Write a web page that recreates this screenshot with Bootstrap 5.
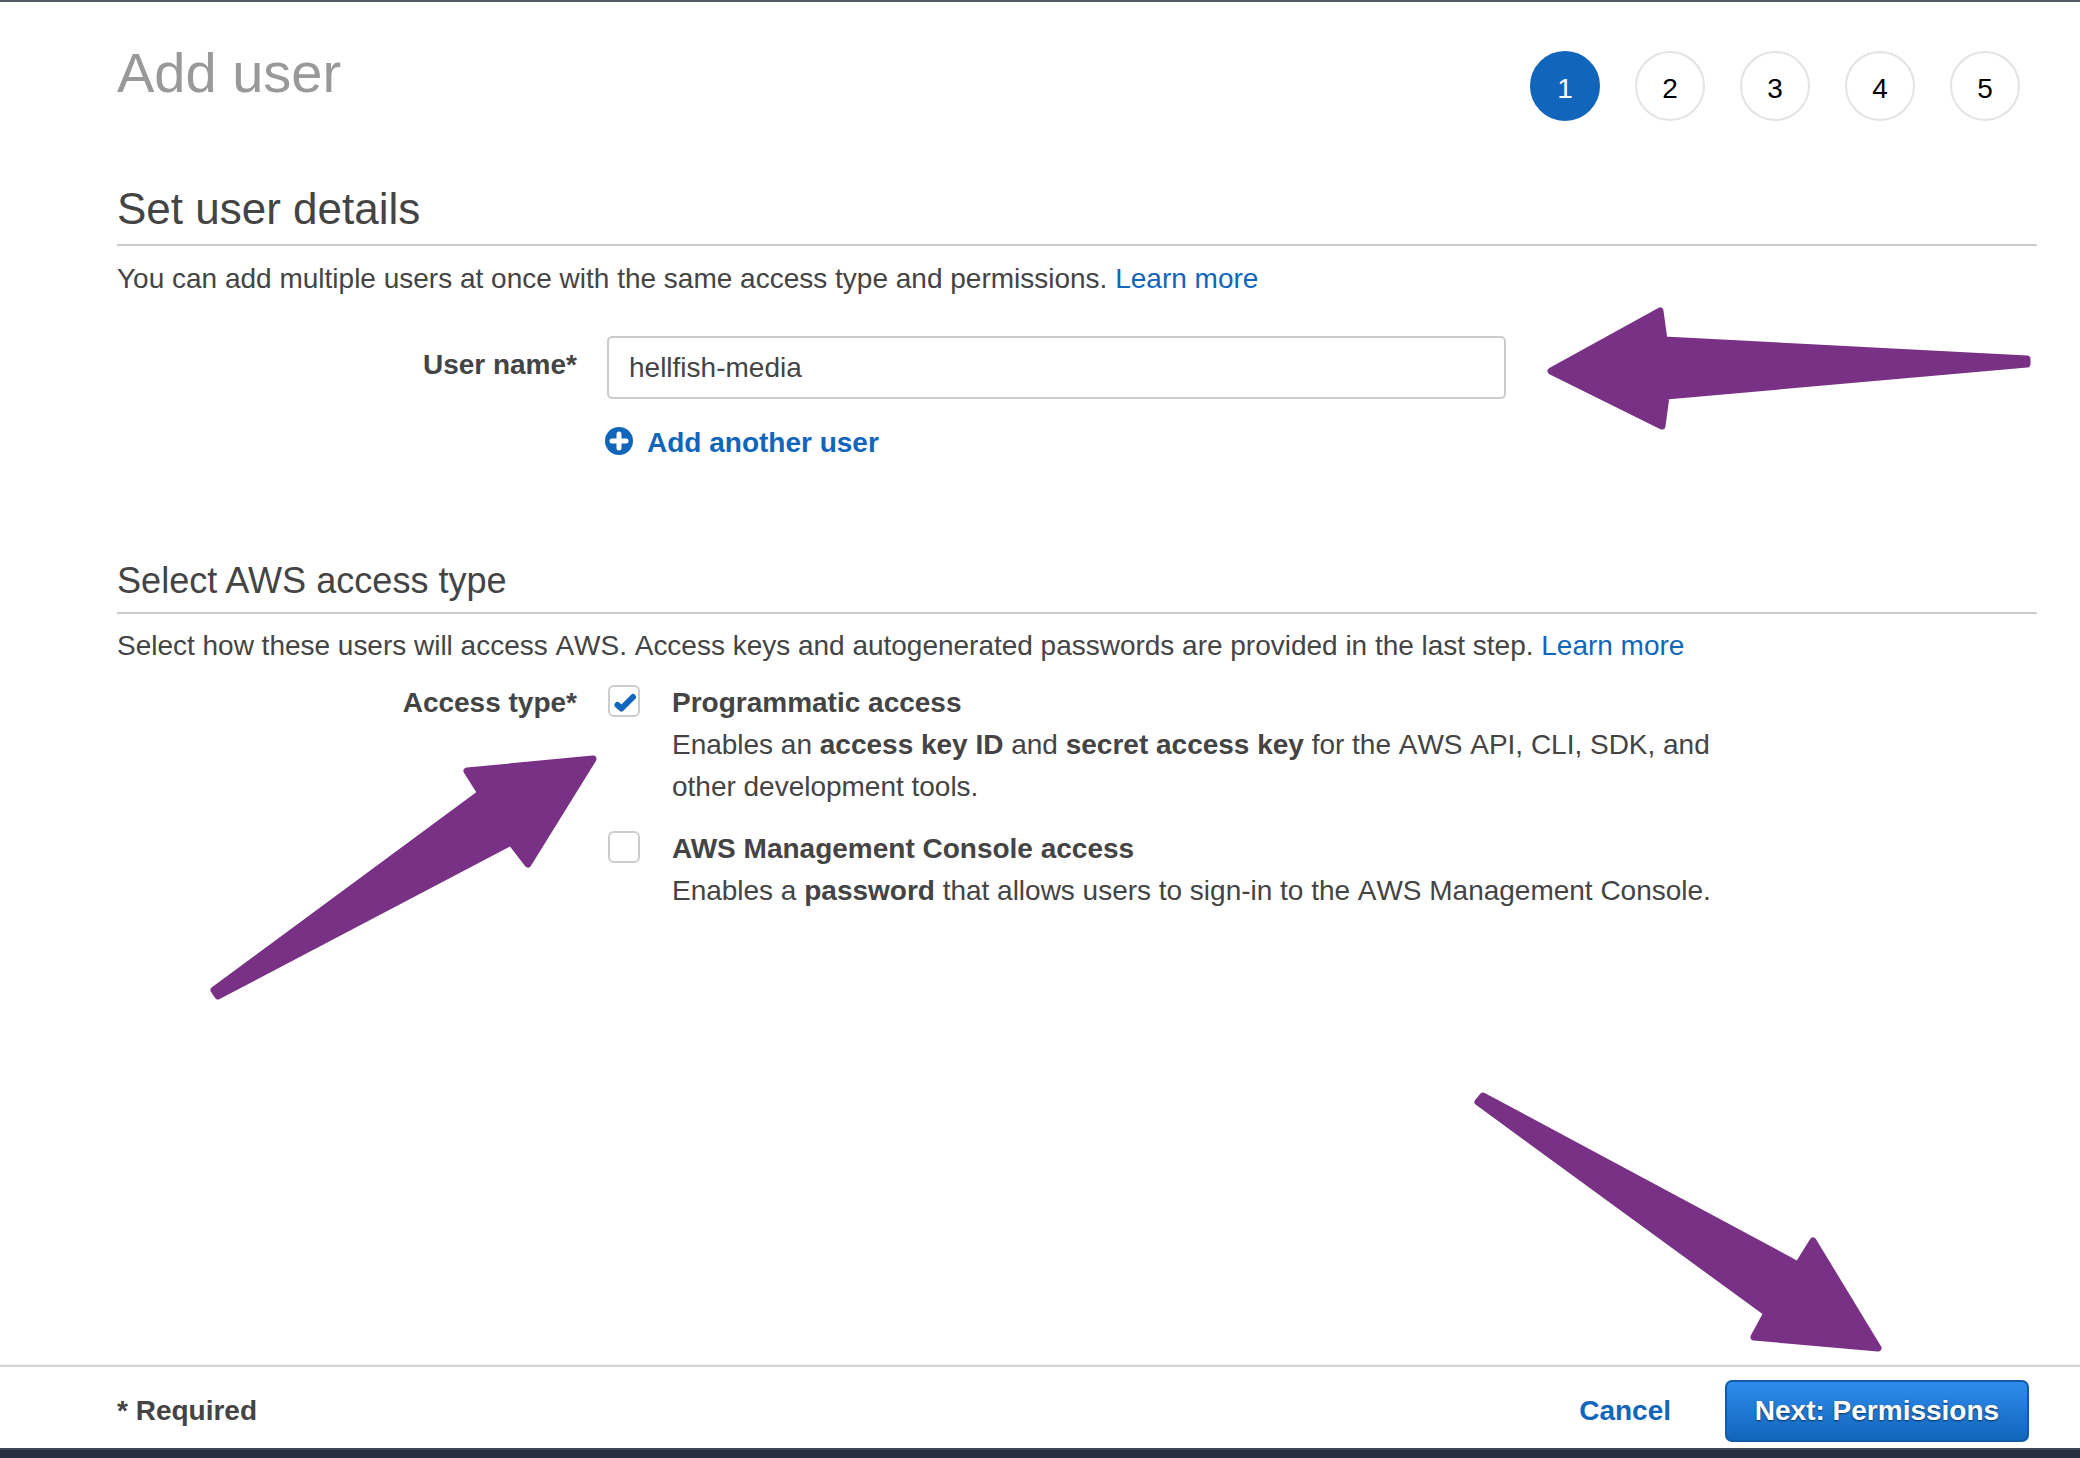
<!DOCTYPE html>
<html lang="en">
<head>
<meta charset="utf-8">
<title>Add user</title>
<link href="https://cdn.jsdelivr.net/npm/bootstrap@5.3.0/dist/css/bootstrap.min.css" rel="stylesheet">
<style>
html,body{height:100%;}
body{font-family:"Liberation Sans",Arial,sans-serif;font-size:28px;line-height:42px;color:#444;background:#fff;position:relative;width:2080px;height:1458px;overflow:hidden;}
a{color:#1166bb;text-decoration:none;}
.topline{height:2px;background:#545b64;}
.wizard{padding:0 43px 0 117px;}
.wtitle{font-size:56px;line-height:64px;color:#999;font-weight:400;margin:39px 0 0;}
.steps{gap:35px;margin:49px 17px 0 0;}
.stepdot{width:70px;height:70px;border:2px solid #e1e4e6;border-radius:50%;color:#000;padding-top:15px;}
.stepdot.on{background:#1166bb;border-color:#1166bb;color:#fff;}
.sect1{font-size:44px;line-height:50px;font-weight:400;color:#444;margin:63px 0 0;padding-bottom:10px;border-bottom:2px solid #ccc;}
.sect2{font-size:36.100px;line-height:42px;font-weight:400;color:#444;margin:96px 0 0;padding-bottom:10px;border-bottom:2px solid #ccc;}
.intro{margin:12px 0 0;}
.intro.nokern{margin-top:11px;}
.nokern{font-kerning:none;letter-spacing:-.012px;}
.nokern strong{font-kerning:normal;letter-spacing:0;}
.namerow{margin-top:36px;}
.lab{width:460px;text-align:right;font-weight:700;flex:none;margin:0;}
.namelab{padding-top:8px;}
.ctl{margin-left:30px;}
.uinput{width:899px;height:63px;border:2px solid #ccc;border-radius:5px;padding:0 20px;font-size:28px;line-height:59px;color:#444;margin:0;}
.uinput:focus{outline:0;box-shadow:none;border-color:#ccc;color:#444;}
.addlink{font-weight:700;gap:14px;margin:23px 0 0 -2px;}
.addlink svg{margin-top:-5px;}
.typerow{margin-top:15px;}
.typectl{width:1160px;}
.tick{width:32px;height:32px;border:2px solid #ccc;border-radius:6px;flex:none;margin:3px 0 0 1px;}
.tick svg{display:block;margin:-2px;}
.optrow{gap:32px;}
.optrow+.optrow{margin-top:20px;}
.foot{height:83px;border-top:2px solid #d5d5d5;box-shadow:0 -1px 1px #eee;padding:7px 51px 0 117px;}
.cancel{font-weight:700;}
.nextbtn{width:304px;height:62px;font-size:28px;font-weight:700;color:#fff;border:2px solid #0f5da8;border-radius:7px;background:linear-gradient(#2f8bec,#1166bb);text-shadow:0 1px 2px rgba(0,0,0,.6);padding:0;margin-left:54px;}
.nextbtn:hover{color:#fff;}
.darkbar{height:10px;background:#232f3e;border-top:2px solid #3f4854;}
.arrows{position:absolute;left:0;top:0;pointer-events:none;}
</style>
</head>
<body class="d-flex flex-column">
<div class="topline"></div>
<main class="wizard flex-grow-1">
  <div class="d-flex justify-content-between align-items-start">
    <h1 class="wtitle">Add user</h1>
    <div class="steps d-flex">
      <div class="stepdot on text-center">1</div>
      <div class="stepdot text-center">2</div>
      <div class="stepdot text-center">3</div>
      <div class="stepdot text-center">4</div>
      <div class="stepdot text-center">5</div>
    </div>
  </div>
  <h2 class="sect1">Set user details</h2>
  <p class="intro">You can add multiple users at once with the same access type and permissions. <a href="#">Learn more</a></p>
  <div class="namerow d-flex">
    <label class="lab namelab" for="un">User name*</label>
    <div class="ctl d-flex flex-column">
      <input id="un" class="uinput form-control" type="text" value="hellfish-media">
      <a href="#" class="addlink d-flex align-items-center"><svg width="28" height="28" viewBox="0 0 28 28"><circle cx="14" cy="14" r="14" fill="#1166bb"/><path d="M14 7v14M7 14h14" stroke="#fff" stroke-width="5" stroke-linecap="round"/></svg><span>Add another user</span></a>
    </div>
  </div>
  <h2 class="sect2">Select AWS access type</h2>
  <p class="intro nokern">Select how these users will access AWS. Access keys and autogenerated passwords are provided in the last step. <a href="#">Learn more</a></p>
  <div class="typerow d-flex">
    <div class="lab">Access type*</div>
    <div class="ctl typectl d-flex flex-column">
      <div class="optrow d-flex">
        <div class="tick"><svg width="32" height="32" viewBox="0 0 32 32"><path d="M9.500 20l4 3.500L25 12" fill="none" stroke="#1166bb" stroke-width="6" stroke-linecap="round" stroke-linejoin="round"/></svg></div>
        <div class="nokern"><strong>Programmatic access</strong><br>Enables an <strong>access key ID</strong> and <strong>secret access key</strong> for the AWS API, CLI, SDK, and other development tools.</div>
      </div>
      <div class="optrow d-flex">
        <div class="tick"></div>
        <div class="nokern"><strong>AWS Management Console access</strong><br>Enables a <strong>password</strong> that allows users to sign-in to the AWS Management Console.</div>
      </div>
    </div>
  </div>
</main>
<footer class="foot d-flex align-items-center justify-content-between">
  <strong>* Required</strong>
  <div class="d-flex align-items-center">
    <a href="#" class="cancel">Cancel</a>
    <button type="button" class="nextbtn btn">Next: Permissions</button>
  </div>
</footer>
<div class="darkbar"></div>
<svg class="arrows" width="2080" height="1458" viewBox="0 0 2080 1458" aria-hidden="true">
  <g fill="#783185" stroke="#783185" stroke-width="7" stroke-linejoin="round">
    <polygon points="1551,371 1660,311 1664,340 2027,359 2027,364 1666,396 1662,426"/>
    <polygon points="214,990 481,793 467,771 593,759 528,864 511,842 218,996"/>
    <polygon points="1478,1102 1483,1096 1798,1265 1813,1241 1878,1348 1754,1337 1767,1313"/>
  </g>
</svg>
</body>
</html>
